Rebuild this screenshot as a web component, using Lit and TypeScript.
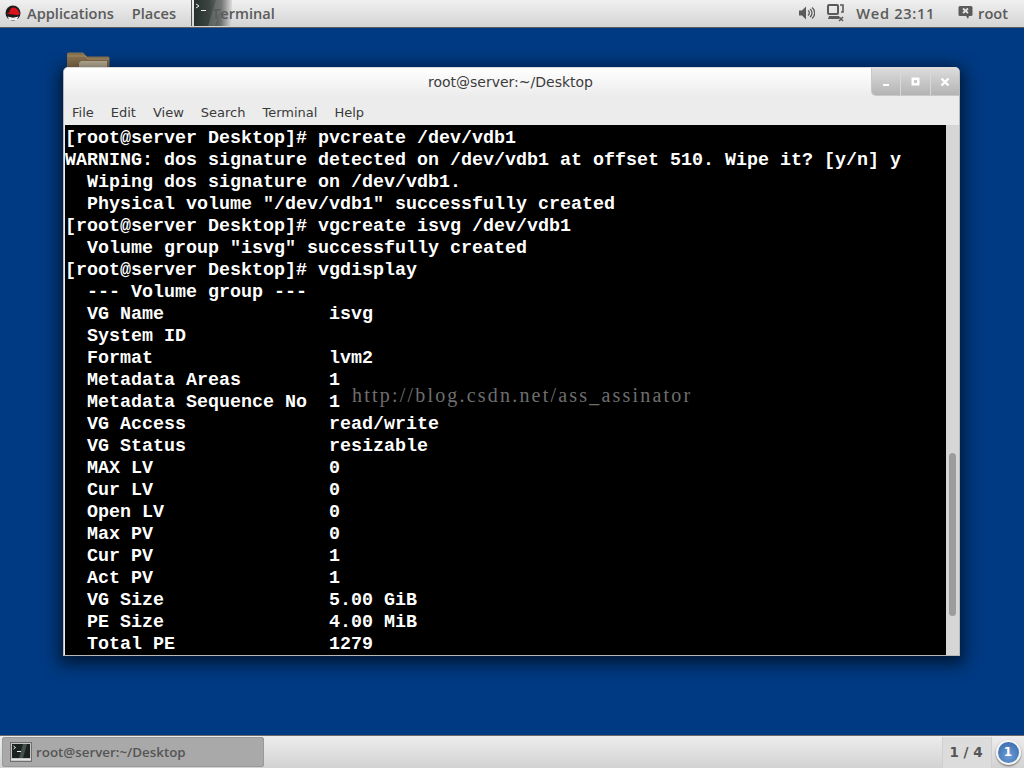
import { LitElement, html, css, svg } from "lit";
import { customElement } from "lit/decorators.js";

const LINES = [
  `[root@server Desktop]# pvcreate /dev/vdb1`,
  `WARNING: dos signature detected on /dev/vdb1 at offset 510. Wipe it? [y/n] y`,
  `  Wiping dos signature on /dev/vdb1.`,
  `  Physical volume "/dev/vdb1" successfully created`,
  `[root@server Desktop]# vgcreate isvg /dev/vdb1`,
  `  Volume group "isvg" successfully created`,
  `[root@server Desktop]# vgdisplay`,
  `  --- Volume group ---`,
  `  VG Name               isvg`,
  `  System ID             `,
  `  Format                lvm2`,
  `  Metadata Areas        1`,
  `  Metadata Sequence No  1`,
  `  VG Access             read/write`,
  `  VG Status             resizable`,
  `  MAX LV                0`,
  `  Cur LV                0`,
  `  Open LV               0`,
  `  Max PV                0`,
  `  Cur PV                1`,
  `  Act PV                1`,
  `  VG Size               5.00 GiB`,
  `  PE Size               4.00 MiB`,
  `  Total PE              1279`,
];

const termIcon = () => svg`
  <svg width="22" height="20" viewBox="0 0 22 20">
    <rect x="0.500" y="0.500" width="21" height="19" fill="#c4c4c4" stroke="#6e6e6e"/>
    <rect x="2" y="2" width="18" height="14" fill="#1a2320"/>
    <path d="M9 16 L13 2 H17 L13 16Z" fill="#46504c"/>
    <path d="M3.500 4l2 1.500-2 1.500" fill="none" stroke="#eee" stroke-width="1"/>
    <path d="M7 9.500h4" stroke="#eee" stroke-width="1"/>
    <rect x="1" y="17" width="20" height="1" fill="#e4e4e4"/>
  </svg>`;

@customElement("app-root")
export class AppRoot extends LitElement {
  static styles = css`
    :host {
      display: block;
      width: 1024px;
      height: 768px;
      overflow: hidden;
      font-family: "Liberation Sans", "DejaVu Sans", sans-serif;
    }
    .screen {
      width: 1024px;
      height: 768px;
      display: flex;
      flex-direction: column;
      background: #003a82;
    }
    .top {
      height: 28px;
      flex: none;
      box-sizing: border-box;
      border-bottom: 1px solid #5c5c5c;
      padding-bottom: 2px;
      background: linear-gradient(#f0f0f0, #d4d4d4);
      display: flex;
      align-items: center;
      font: 600 14.6px "Open Sans", sans-serif;
      color: #5a5a5a;
    }
    .logo { margin-left: 5px; margin-right: 6px; flex: none; }
    .places { margin-left: 18px; }
    .sep {
      margin-left: 15px;
      width: 1px;
      height: 26px;
      align-self: flex-start;
      background: #555;
      flex: none;
    }
    .task {
      margin-left: 2px;
      width: 38px;
      height: 26px;
      align-self: flex-start;
      flex: none;
      position: relative;
      background: linear-gradient(90deg, #26302c 0%, #3c4541 40%, #6a6f6c 70%, #dcdcdc 100%);
    }
    .task svg { position: absolute; left: 0; top: 0; }
    .task-label { margin-left: -20px; position: relative; }
    .spacer { flex: 1; }
    .tray { display: flex; align-items: center; }
    .clock { margin-left: 12px; margin-right: 23px; letter-spacing: 0.7px; }
    .user { margin-left: 5px; margin-right: 16px; }
    .net { margin-left: 12px; }

    .desk { flex: 1; position: relative; }
    .folder { position: absolute; left: 67px; top: 24px; }
    .win {
      position: absolute;
      left: 63px;
      top: 39px;
      width: 897px;
      height: 589px;
      box-sizing: border-box;
      border: 1px solid #b8b8b8;
      border-top-color: #dcdcdc;
      border-radius: 5px 5px 0 0;
      background: #ececec;
      box-shadow: 0 4px 16px 4px rgba(0, 0, 0, 0.6);
      display: flex;
      flex-direction: column;
      overflow: hidden;
    }
    .title {
      height: 29px;
      flex: none;
      position: relative;
      background: linear-gradient(#ffffff, #ececec);
      display: flex;
      align-items: center;
      justify-content: center;
      color: #3c3c3c;
      font: 400 14px "DejaVu Sans", sans-serif;
      padding-bottom: 2px;
      box-sizing: border-box;
      padding-right: 2px;
    }
    .btns {
      position: absolute;
      right: 0;
      top: 0;
      width: 88px;
      height: 28px;
      box-sizing: border-box;
      display: flex;
      background: linear-gradient(#dcdcdc, #b4b4b4);
      border-bottom: 1px solid #c8c8c8;
      border-left: 1px solid #c8c8c8;
      border-radius: 0 0 0 5px;
    }
    .btn {
      flex: 1;
      display: flex;
      align-items: center;
      justify-content: center;
      border-left: 1px solid #d8d8d8;
    }
    .btn:first-child { border-left: 0; }
    .menu {
      height: 28px;
      flex: none;
      display: flex;
      align-items: center;
      gap: 17px;
      padding-left: 8px;
      padding-top: 2px;
      box-sizing: border-box;
      font: 400 13px "DejaVu Sans", sans-serif;
      color: #3a3a3a;
    }
    .body { flex: 1; display: flex; min-height: 0; }
    .term {
      flex: 1;
      min-width: 0;
      margin-left: 1px;
      background: #000;
      position: relative;
      overflow: hidden;
      color: #fff;
      font: 700 18.33px/22px "Liberation Mono", monospace;
      white-space: pre;
      padding-top: 3px;
    }
    .line { height: 22px; }
    .mark {
      position: absolute;
      left: 287px;
      top: 258px;
      font: 400 20px/24px "Liberation Serif", serif;
      color: #6e6e6e;
      letter-spacing: 2.2px;
    }
    .scroll {
      width: 13px;
      flex: none;
      background: #d6d6d6;
      position: relative;
    }
    .thumb {
      position: absolute;
      left: 3px;
      top: 328px;
      width: 7px;
      height: 163px;
      border-radius: 4px;
      background: #9c9c9c;
    }
    .bottom {
      height: 33px;
      flex: none;
      box-sizing: border-box;
      border-top: 1px solid #6a6a6a;
      background: linear-gradient(#ededed, #d2d2d2);
      display: flex;
      align-items: stretch;
    }
    .tb {
      margin: 1px 0 1px 2px;
      width: 262px;
      box-sizing: border-box;
      background: #a9a9a9;
      border: 1px solid #999;
      border-radius: 2px;
      display: flex;
      align-items: center;
      padding-left: 7px;
      padding-bottom: 1px;
      font: 600 13.35px "Open Sans", sans-serif;
      color: #555;
      gap: 4px;
    }
    .pager {
      width: 50px;
      margin-top: 1px;
      padding-right: 2px;
      padding-bottom: 2px;
      box-sizing: border-box;
      border-left: 1px solid #cfcfcf;
      border-right: 1px solid #cfcfcf;
      background: #dcdcdc;
      display: flex;
      align-items: center;
      justify-content: center;
      font: 700 13.5px "DejaVu Sans", sans-serif;
      color: #555;
    }
    .ws { width: 32px; flex: none; display: flex; align-items: center; justify-content: center; }
    .num {
      width: 25px; height: 25px; box-sizing: border-box; border-radius: 50%;
      border: 2px solid #f4f4f4;
      background: radial-gradient(circle at 50% 65%, #6f9ed6, #2f63a8);
      box-shadow: 0 1px 2px rgba(0,0,0,.5);
      color: #fff; font: 700 12px/21px "DejaVu Sans", sans-serif; text-align: center;
    }
  `;

  render() {
    return html`
      <div class="screen">
        <div class="top">
          <svg class="logo" width="16" height="16" viewBox="0 0 16 16">
            <circle cx="8" cy="8" r="7.500" fill="#1c1c1c"/>
            <path d="M2.500 11.500 C5 15.500 11 15.500 13.500 11.500 C10 13 6 13 2.500 11.500Z" fill="#fff"/>
            <path d="M3 12 C6 13.500 10 13.500 13 12 L12 15 H4Z" fill="#f0f0f0"/>
            <path d="M1.500 8.500 C3 8 4 8 4.500 6.500 C5 3.500 7 2 9.500 2.500 C12 3 13.500 6 14.500 8 C15 10 12.500 10.500 10 9.800 C7 9 4.500 9.500 1.500 8.500Z" fill="#d8141c"/>
          </svg>
          <span>Applications</span>
          <span class="places">Places</span>
          <div class="sep"></div>
          <div class="task">
            <svg width="38" height="26" viewBox="0 0 38 26">
              <path d="M14 26 L22 0 H29 L21 26Z" fill="#7c817e" opacity=".45"/>
              <path d="M2 4l3 2-3 2" fill="none" stroke="#eee"/>
              <path d="M7 10.500h5" stroke="#eee"/>
            </svg>
          </div>
          <span class="task-label">Terminal</span>
          <div class="spacer"></div>
          <div class="tray">
            <svg width="16" height="14" viewBox="0 0 16 14">
              <path d="M0 4.500h3l4-4v13l-4-4H0Z" fill="#5a5a5a"/>
              <path d="M9 4.500a3 3 0 0 1 0 5M11 3a5 5 0 0 1 0 8M13 1.500a7 7 0 0 1 0 11" fill="none" stroke="#5a5a5a" stroke-width="1.300"/>
            </svg>
            <svg class="net" width="17" height="20" viewBox="0 0 17 20">
              <rect x="1" y="2" width="10" height="9" rx="1" fill="none" stroke="#5a5a5a" stroke-width="2"/>
              <path d="M2 13h10v3H1Z" fill="#5a5a5a"/>
              <path d="M13 2h3v7h-2" fill="none" stroke="#5a5a5a" stroke-width="1.600"/>
              <path d="M12 14l4 4m0-4l-4 4" stroke="#5a5a5a" stroke-width="1.600"/>
            </svg>
            <span class="clock">Wed 23:11</span>
            <svg width="15" height="15" viewBox="0 0 15 15">
              <path d="M2 1h11a1.500 1.500 0 0 1 1.500 1.500v7A1.500 1.500 0 0 1 13 11h-2l-1 3-2-3H2A1.500 1.500 0 0 1 .5 9.500v-7A1.500 1.500 0 0 1 2 1Z" fill="#5a5a5a"/>
              <path d="M5 3.500l5 4.500m0-4.500l-5 4.500" stroke="#e4e4e4" stroke-width="1.800"/>
            </svg>
            <span class="user">root</span>
          </div>
        </div>
        <div class="desk">
          <svg class="folder" width="43" height="16" viewBox="0 0 43 16">
            <path d="M0 16V2a1.500 1.500 0 0 1 1.500-1.500H16l4 4h21a1.500 1.500 0 0 1 1.500 1.500v10Z" fill="#8a7350"/>
            <path d="M12 11l2-2h26v7H12Z" fill="#c4b8a0"/>
            <path d="M1 4h17l3 3h21" fill="none" stroke="#a8926c"/>
          </svg>
          <div class="win">
            <div class="title">
              root@server:~/Desktop
              <div class="btns">
                <div class="btn"><svg width="8" height="8" viewBox="0 0 8 8"><path d="M1 6h6v2H1Z" fill="#fff"/></svg></div>
                <div class="btn"><svg width="9" height="9" viewBox="0 0 9 9"><path d="M0.500 0.500h8v8h-8ZM3 3v3h3V3Z" fill="#fff" fill-rule="evenodd"/></svg></div>
                <div class="btn"><svg width="10" height="10" viewBox="0 0 10 10"><path d="M1.500 1.500l7 7m0-7l-7 7" stroke="#fff" stroke-width="2.400"/></svg></div>
              </div>
            </div>
            <div class="menu">
              <span>File</span><span>Edit</span><span>View</span><span>Search</span><span>Terminal</span><span>Help</span>
            </div>
            <div class="body">
              <div class="term">${LINES.map((l) => html`<div class="line">${l}</div>`)}
                <div class="mark">http://blog.csdn.net/ass_assinator</div>
              </div>
              <div class="scroll"><div class="thumb"></div></div>
            </div>
          </div>
        </div>
        <div class="bottom">
          <div class="tb">${termIcon()}<span>root@server:~/Desktop</span></div>
          <div class="spacer"></div>
          <div class="pager">1 / 4</div>
          <div class="ws"><div class="num">1</div></div>
        </div>
      </div>
    `;
  }
}
